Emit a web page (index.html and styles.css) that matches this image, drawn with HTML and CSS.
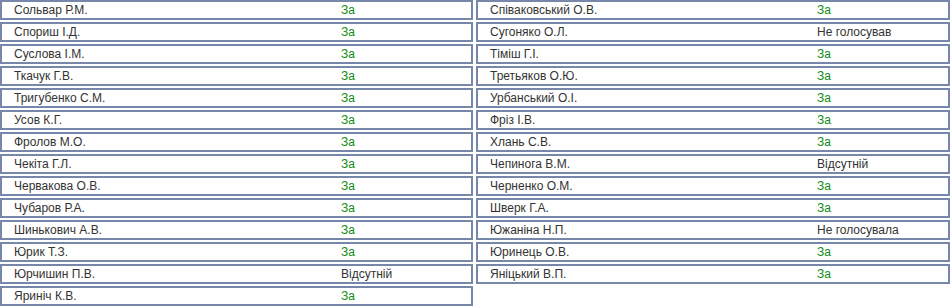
FILE: index.html
```html
<!DOCTYPE html>
<html lang="uk">
<head>
<meta charset="utf-8">
<link rel="stylesheet" href="styles.css">
</head>
<body>
<div class="votes">
  <div class="col">
    <div class="row"><span class="name">Сольвар Р.М.</span><span class="st yes">За</span></div>
    <div class="row"><span class="name">Спориш І.Д.</span><span class="st yes">За</span></div>
    <div class="row"><span class="name">Суслова І.М.</span><span class="st yes">За</span></div>
    <div class="row"><span class="name">Ткачук Г.В.</span><span class="st yes">За</span></div>
    <div class="row"><span class="name">Тригубенко С.М.</span><span class="st yes">За</span></div>
    <div class="row"><span class="name">Усов К.Г.</span><span class="st yes">За</span></div>
    <div class="row"><span class="name">Фролов М.О.</span><span class="st yes">За</span></div>
    <div class="row"><span class="name">Чекіта Г.Л.</span><span class="st yes">За</span></div>
    <div class="row"><span class="name">Червакова О.В.</span><span class="st yes">За</span></div>
    <div class="row"><span class="name">Чубаров Р.А.</span><span class="st yes">За</span></div>
    <div class="row"><span class="name">Шинькович А.В.</span><span class="st yes">За</span></div>
    <div class="row"><span class="name">Юрик Т.З.</span><span class="st yes">За</span></div>
    <div class="row"><span class="name">Юрчишин П.В.</span><span class="st">Відсутній</span></div>
    <div class="row"><span class="name">Яриніч К.В.</span><span class="st yes">За</span></div>
  </div>
  <div class="col">
    <div class="row"><span class="name">Співаковський О.В.</span><span class="st yes">За</span></div>
    <div class="row"><span class="name">Сугоняко О.Л.</span><span class="st">Не голосував</span></div>
    <div class="row"><span class="name">Тіміш Г.І.</span><span class="st yes">За</span></div>
    <div class="row"><span class="name">Третьяков О.Ю.</span><span class="st yes">За</span></div>
    <div class="row"><span class="name">Урбанський О.І.</span><span class="st yes">За</span></div>
    <div class="row"><span class="name">Фріз І.В.</span><span class="st yes">За</span></div>
    <div class="row"><span class="name">Хлань С.В.</span><span class="st yes">За</span></div>
    <div class="row"><span class="name">Чепинога В.М.</span><span class="st">Відсутній</span></div>
    <div class="row"><span class="name">Черненко О.М.</span><span class="st yes">За</span></div>
    <div class="row"><span class="name">Шверк Г.А.</span><span class="st yes">За</span></div>
    <div class="row"><span class="name">Южаніна Н.П.</span><span class="st">Не голосувала</span></div>
    <div class="row"><span class="name">Юринець О.В.</span><span class="st yes">За</span></div>
    <div class="row"><span class="name">Яніцький В.П.</span><span class="st yes">За</span></div>
  </div>
</div>
</body>
</html>
```
FILE: styles.css
```css
html, body {
  margin: 0;
  padding: 0;
  background: #ffffff;
}
body {
  font-family: "Liberation Sans", Arial, sans-serif;
  font-size: 12px;
  color: #333333;
}
.votes {
  display: grid;
  grid-template-columns: 473px 474px;
  column-gap: 3px;
  align-items: start;
}
.col {
  display: flex;
  flex-direction: column;
  gap: 2px;
}
.row {
  box-sizing: border-box;
  height: 20px;
  border: 2px solid #7687aa;
  display: grid;
  grid-template-columns: 327px 1fr;
  align-items: center;
  padding-left: 12px;
  line-height: 16px;
}
.st.yes {
  color: #108a10;
}
```
